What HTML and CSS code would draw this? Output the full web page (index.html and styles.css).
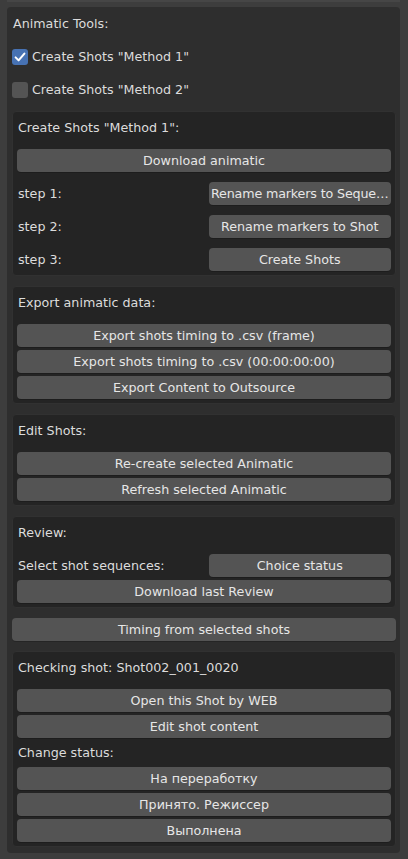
FILE: index.html
```html
<!DOCTYPE html>
<html lang="en">
<head>
<meta charset="utf-8">
<title>Animatic Tools</title>
<link rel="stylesheet" href="styles.css">
</head>
<body>
<div class="top-edge"></div>
<div class="panel">
  <div class="row label">Animatic Tools:</div>
  <label class="row check">
    <span class="cb on"><svg viewBox="0 0 16 16" width="16" height="16"><path d="M3.6 8.4 L6.6 11.4 L12.4 4.6" fill="none" stroke="#ffffff" stroke-width="2" stroke-linecap="round" stroke-linejoin="round"/></svg></span>
    <span>Create Shots "Method 1"</span>
  </label>
  <label class="row check">
    <span class="cb"></span>
    <span>Create Shots "Method 2"</span>
  </label>

  <div class="box">
    <div class="row label">Create Shots "Method 1":</div>
    <div class="col">
      <button class="btn">Download animatic</button>
    </div>
    <div class="split">
      <span class="label">step 1:</span>
      <button class="btn tight">Rename markers to Seque…</button>
    </div>
    <div class="split">
      <span class="label">step 2:</span>
      <button class="btn">Rename markers to Shot</button>
    </div>
    <div class="split">
      <span class="label">step 3:</span>
      <button class="btn">Create Shots</button>
    </div>
  </div>

  <div class="box">
    <div class="row label">Export animatic data:</div>
    <div class="col">
      <button class="btn">Export shots timing to .csv (frame)</button>
      <button class="btn">Export shots timing to .csv (00:00:00:00)</button>
      <button class="btn">Export Content to Outsource</button>
    </div>
  </div>

  <div class="box">
    <div class="row label">Edit Shots:</div>
    <div class="col">
      <button class="btn">Re-create selected Animatic</button>
      <button class="btn">Refresh selected Animatic</button>
    </div>
  </div>

  <div class="box">
    <div class="row label">Review:</div>
    <div class="col">
      <div class="split">
        <span class="label">Select shot sequences:</span>
        <button class="btn">Choice status</button>
      </div>
      <button class="btn">Download last Review</button>
    </div>
  </div>

  <button class="btn">Timing from selected shots</button>

  <div class="box">
    <div class="row label">Checking shot: Shot002_001_0020</div>
    <div class="col">
      <button class="btn">Open this Shot by WEB</button>
      <button class="btn">Edit shot content</button>
      <div class="row label">Change status:</div>
      <button class="btn">На переработку</button>
      <button class="btn">Принято. Режиссер</button>
      <button class="btn">Выполнена</button>
    </div>
  </div>
</div>
</body>
</html>
```

FILE: styles.css
```css
html, body {
  margin: 0;
  padding: 0;
  background: #3d3d3d;
  width: 408px;
  height: 859px;
  overflow: hidden;
  font-family: "DejaVu Sans", "Noto Sans", sans-serif;
  font-size: 12.7px;
  color: #dcdcdc;
}

.top-edge {
  margin-left: 7px;
  width: 393px;
  height: 2px;
  background: #464646;
}

.panel {
  margin: 5px 0 0 7px;
  width: 393px;
  box-sizing: border-box;
  background: #2e2e2e;
  border-radius: 4px;
  padding: 5px 4px 6px 5px;
  display: flex;
  flex-direction: column;
  gap: 10px;
}

.row {
  height: 23px;
  display: flex;
  align-items: center;
}

.label {
  white-space: nowrap;
  padding-left: 1px;
}

.check {
  gap: 4px;
  padding-left: 0;
}

.cb {
  width: 16px;
  height: 16px;
  border-radius: 3px;
  background: #545454;
  display: inline-flex;
}

.cb.on {
  background: #4772b3;
}

.box {
  background: #242424;
  border: 1px solid #313131;
  border-radius: 4px;
  padding: 4px;
  display: flex;
  flex-direction: column;
  gap: 10px;
}

.col {
  display: flex;
  flex-direction: column;
  gap: 3px;
}

.split {
  display: grid;
  grid-template-columns: 1fr 1fr;
  column-gap: 9px;
  align-items: center;
  height: 23px;
}

.btn {
  height: 23px;
  margin: 0;
  padding: 0 4px;
  border: none;
  border-radius: 4px;
  background: #545454;
  color: #e6e6e6;
  font-family: inherit;
  font-size: inherit;
  text-align: center;
  white-space: nowrap;
  box-shadow: 0 1px 0 rgba(0, 0, 0, 0.18);
}

.btn.tight {
  padding: 0;
  letter-spacing: -0.15px;
}
```
